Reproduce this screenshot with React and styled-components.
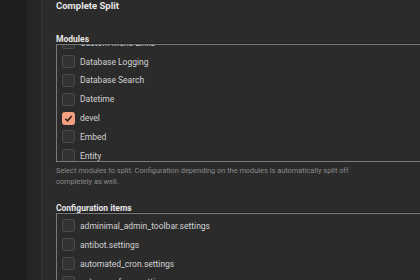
import React from "react";
import styled, { createGlobalStyle } from "styled-components";

const colors = {
  page: "#2b2b2c",
  rail: "#1e1e1f",
  gutter: "#262627",
  line: "#343435",
  border: "#7a7a7a",
  text: "#d2d2d2",
  label: "#e8e8e8",
  muted: "#8a8a8a",
  boxBg: "#333334",
  boxBorder: "#4c4c4d",
  accent: "#f29f82",
};

const modules = [
  { name: "Custom Menu Links" },
  { name: "Database Logging" },
  { name: "Database Search" },
  { name: "Datetime" },
  { name: "devel", checked: true },
  { name: "Embed" },
  { name: "Entity" },
];

const configItems = [
  "adminimal_admin_toolbar.settings",
  "antibot.settings",
  "automated_cron.settings",
  "autosave_form.settings",
];

const GlobalStyle = createGlobalStyle`
  html, body {
    margin: 0;
    background: ${colors.page};
    overflow: hidden;
  }
  body {
    font-family: Roboto, "Liberation Sans", sans-serif;
  }
`;

const Check = ({ checked }) => (
  <Box $checked={checked}>
    {checked && (
      <svg width="9" height="9" viewBox="0 0 10 10">
        <path d="M1.5 5.2 L4 7.6 L8.6 2.2" fill="none" stroke="#2a1a14" strokeWidth="1.6" />
      </svg>
    )}
  </Box>
);

const App = () => {
  return (
    <>
      <GlobalStyle />
      <Layout>
        <Rail />
        <Gutter />
        <Main>
          <Title>Complete Split</Title>

          <Label $top={22}>Modules</Label>
          <ListFrame $height={116}>
            <List $offset={-11.5}>
              {modules.map((m) => (
                <Row key={m.name}>
                  <Check checked={m.checked} />
                  <span>{m.name}</span>
                </Row>
              ))}
            </List>
          </ListFrame>
          <Help>
            Select modules to split. Configuration depending on the modules is automatically split off
            completely as well.
          </Help>

          <Label $top={16}>Configuration items</Label>
          <ListFrame $height={80}>
            <List $offset={2.6}>
              {configItems.map((c) => (
                <Row key={c}>
                  <Check />
                  <span>{c}</span>
                </Row>
              ))}
            </List>
          </ListFrame>
        </Main>
      </Layout>
    </>
  );
};

const Layout = styled.div`
  display: flex;
  width: 420px;
  height: 280px;
  overflow: hidden;
`;

const Rail = styled.div`
  width: 27px;
  flex-shrink: 0;
  background: ${colors.rail};
`;

const Gutter = styled.div`
  width: 14px;
  flex-shrink: 0;
  background: ${colors.gutter};
  border-right: 1px solid ${colors.line};
`;

const Main = styled.div`
  flex: 1;
  padding-left: 14px;
  min-width: 0;
`;

const Title = styled.div`
  font-size: 9.5px;
  font-weight: 700;
  color: ${colors.label};
  line-height: 12px;
`;

const Label = styled.div`
  font-size: 8.5px;
  font-weight: 700;
  color: ${colors.label};
  line-height: 10px;
  margin-top: ${(p) => p.$top}px;
`;

const ListFrame = styled.div`
  height: ${(p) => p.$height}px;
  margin-right: -10px;
  border: 1px solid ${colors.border};
  border-right: none;
  box-shadow: 0 -1px 0 #1f1f20;
  overflow: hidden;
`;

const List = styled.div`
  margin-top: ${(p) => p.$offset}px;
  padding-left: 5px;
`;

const Row = styled.div`
  display: flex;
  align-items: center;
  gap: 5px;
  height: 18.8px;
  font-size: 8.5px;
  color: ${colors.text};
`;

const Box = styled.div`
  width: 11px;
  height: 11px;
  flex-shrink: 0;
  border-radius: 2.5px;
  border: 1px solid ${(p) => (p.$checked ? colors.accent : colors.boxBorder)};
  background: ${(p) => (p.$checked ? colors.accent : colors.boxBg)};
  display: flex;
  align-items: center;
  justify-content: center;
`;

const Help = styled.div`
  margin-top: 3px;
  font-size: 7.4px;
  line-height: 11px;
  color: ${colors.muted};
  max-width: 310px;
`;

export default App;
